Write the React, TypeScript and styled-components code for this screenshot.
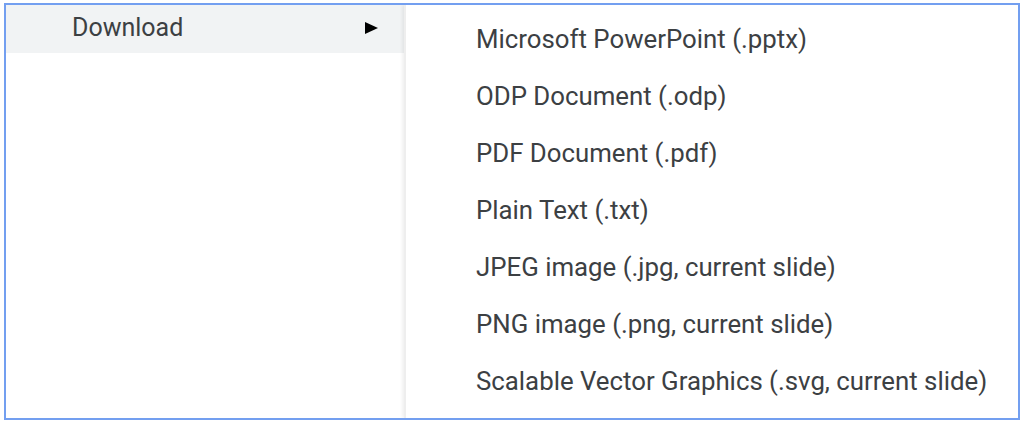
import React from "react";
import styled, { createGlobalStyle } from "styled-components";

const GlobalStyle = createGlobalStyle`
  body {
    margin: 0;
    background: #ffffff;
    font-family: Roboto, "Liberation Sans", Arial, sans-serif;
  }
`;

// Components
const Frame = styled.div`
  box-sizing: border-box;
  margin: 3px 0 0 4px;
  width: 1016px;
  height: 417px;
  border: 2px solid #739ff0;
  display: flex;
  background: #ffffff;
  overflow: hidden;
`;

const ParentMenu = styled.div`
  width: 398px;
  flex-shrink: 0;
  display: flex;
  flex-direction: column;
`;

const ParentItem = styled.div<{ $active?: boolean }>`
  height: 48px;
  display: flex;
  align-items: center;
  padding: 0 26px 3px 66px;
  background: ${(p) => (p.$active ? "#f1f3f4" : "transparent")};
  color: #3c4043;
  font-size: 25px;
  box-sizing: border-box;
`;

const Label = styled.span`
  flex: 1;
`;

const Arrow = styled.svg`
  width: 13px;
  height: 12px;
  flex-shrink: 0;
`;

const SubMenu = styled.div`
  flex: 1;
  display: flex;
  flex-direction: column;
  padding-top: 5px;
  border-left: 2px solid #eeeeee;
  box-shadow: -2px 0 3px rgba(0, 0, 0, 0.06);
`;

const SubItem = styled.div`
  height: 57px;
  display: flex;
  align-items: center;
  padding-left: 70px;
  color: #3c4043;
  font-size: 25.8px;
  white-space: nowrap;
`;

const formats = [
  "Microsoft PowerPoint (.pptx)",
  "ODP Document (.odp)",
  "PDF Document (.pdf)",
  "Plain Text (.txt)",
  "JPEG image (.jpg, current slide)",
  "PNG image (.png, current slide)",
  "Scalable Vector Graphics (.svg, current slide)",
];

export default function App() {
  return (
    <>
      <GlobalStyle />
      <Frame>
        <ParentMenu>
          <ParentItem $active>
            <Label>Download</Label>
            <Arrow viewBox="0 0 13 12">
              <polygon points="0,0 13,6 0,12" fill="#000000" />
            </Arrow>
          </ParentItem>
        </ParentMenu>
        <SubMenu>
          {formats.map((f) => (
            <SubItem key={f}>{f}</SubItem>
          ))}
        </SubMenu>
      </Frame>
    </>
  );
}
